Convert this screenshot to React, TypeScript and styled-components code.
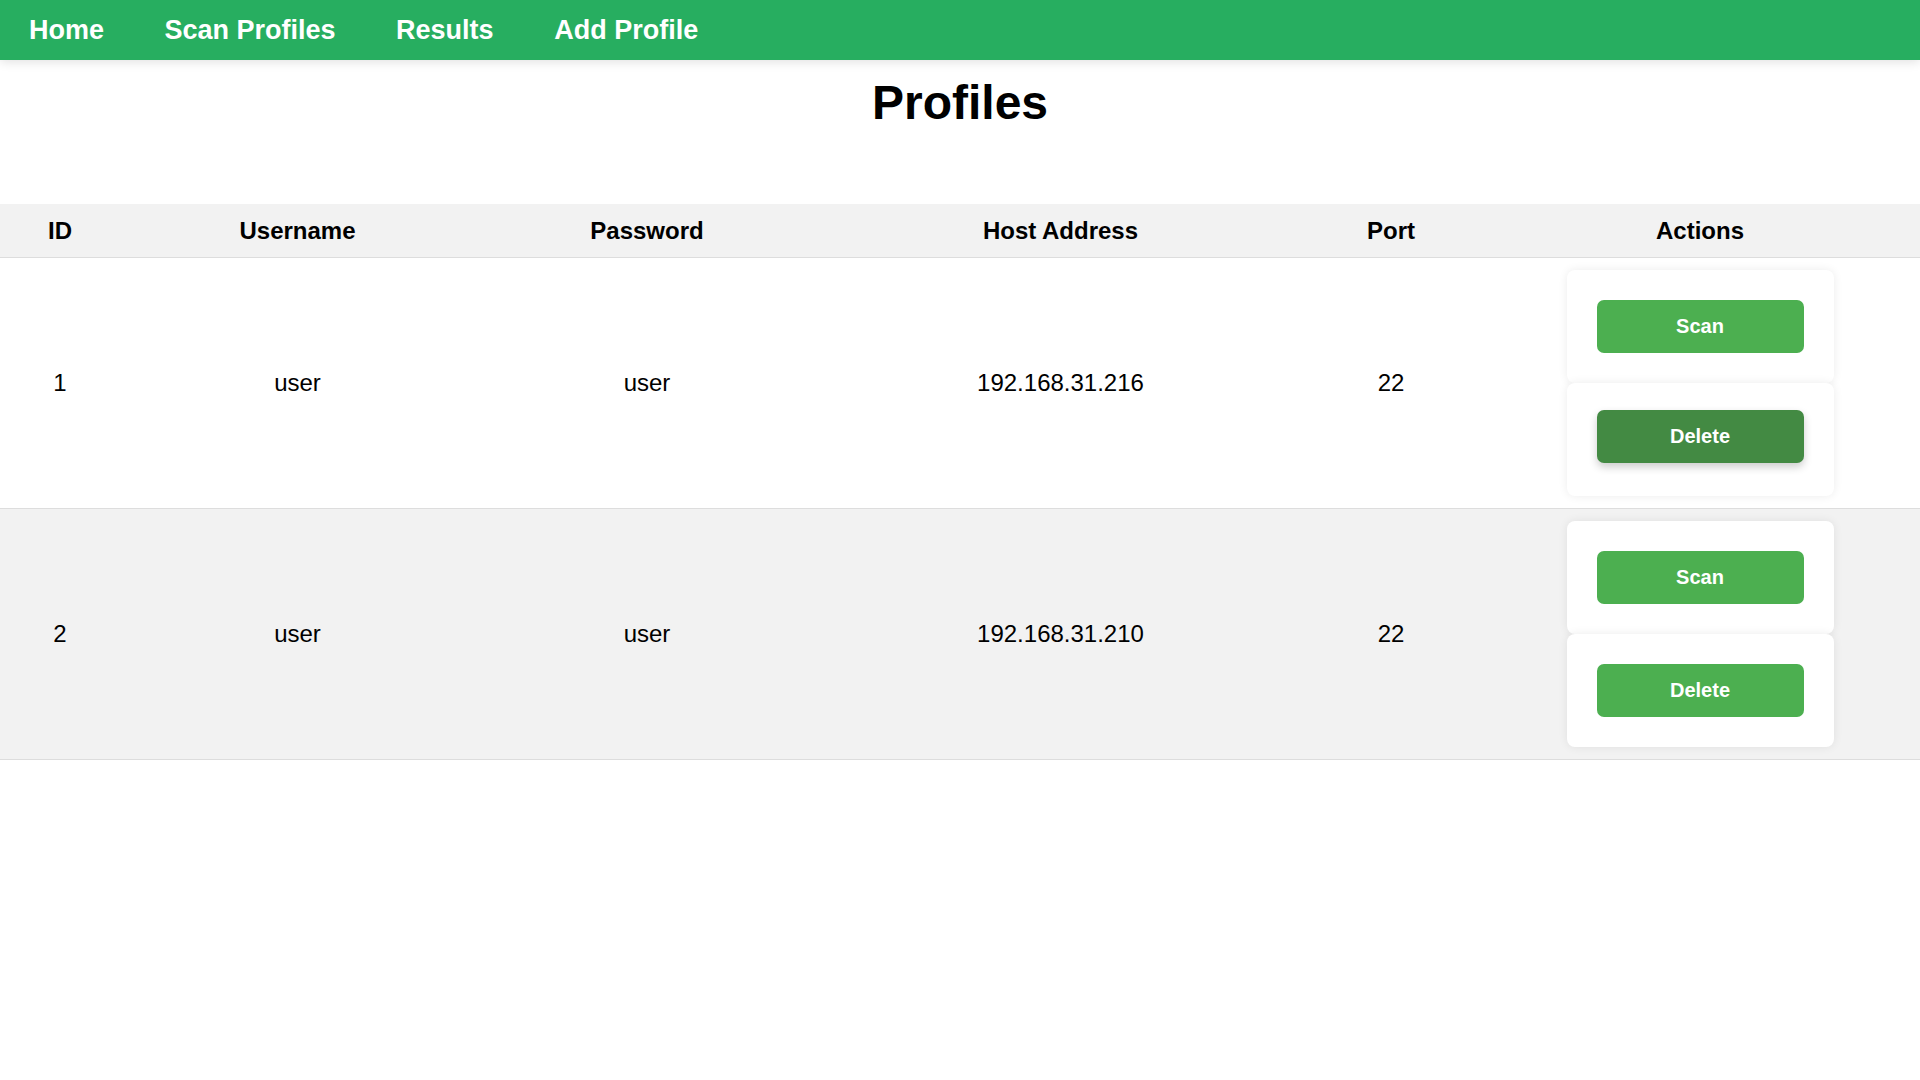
import React from "react";
import styled, { createGlobalStyle } from "styled-components";

const GlobalStyle = createGlobalStyle`
  html, body {
    margin: 0;
    padding: 0;
    background: #ffffff;
    font-family: "Liberation Sans", Arial, sans-serif;
    color: #000;
  }
  * { box-sizing: border-box; }
`;

const NavBar = styled.nav`
  display: flex;
  align-items: center;
  gap: 60.5px;
  height: 60px;
  padding-left: 29px;
  background: #27ae60;
  box-shadow: 0 2px 10px rgba(0, 0, 0, 0.12);
  position: relative;
  z-index: 1;
`;

const NavLink = styled.a`
  color: #ffffff;
  font-weight: 700;
  font-size: 27px;
  text-decoration: none;
  cursor: pointer;
`;

const Title = styled.h1`
  margin: 15px 0 0;
  text-align: center;
  font-size: 48px;
  font-weight: 700;
  line-height: normal;
`;

const Table = styled.table`
  width: 100%;
  margin-top: 74px;
  border-collapse: collapse;
  table-layout: fixed;
  font-size: 24px;
`;

const HeadCell = styled.th`
  background: #f2f2f2;
  padding: 13px 8px 12px;
  font-weight: 700;
  text-align: center;
  border-bottom: 1px solid #ddd;
`;

const Row = styled.tr<{ $striped: boolean }>`
  background: ${(p) => (p.$striped ? "#f2f2f2" : "#ffffff")};
  border-bottom: 1px solid #ddd;
`;

const Cell = styled.td`
  padding: 12px 8px;
  text-align: center;
  vertical-align: middle;
`;

const ActionStack = styled.div`
  display: flex;
  flex-direction: column;
  align-items: center;
`;

const ActionCard = styled.div`
  width: 267px;
  padding: 30px;
  background: #ffffff;
  border-radius: 8px;
  box-shadow: 0 0 10px rgba(0, 0, 0, 0.08);
`;

const ActionButton = styled.button<{ $active?: boolean }>`
  display: block;
  width: 207px;
  height: 53px;
  border: none;
  border-radius: 7px;
  background: ${(p) => (p.$active ? "#438a43" : "#4caf50")};
  color: #ffffff;
  font-family: "Liberation Sans", Arial, sans-serif;
  font-weight: 700;
  font-size: 20px;
  cursor: pointer;
  transform: ${(p) => (p.$active ? "translateY(-3px)" : "none")};
  box-shadow: ${(p) => (p.$active ? "0 4px 8px rgba(0, 0, 0, 0.2)" : "none")};
`;

const columns = [
  { label: "ID", width: 120 },
  { label: "Username", width: 355 },
  { label: "Password", width: 344 },
  { label: "Host Address", width: 483 },
  { label: "Port", width: 178 },
  { label: "Actions", width: 440 },
];

const profiles = [
  { id: 1, username: "user", password: "user", host: "192.168.31.216", port: 22 },
  { id: 2, username: "user", password: "user", host: "192.168.31.210", port: 22 },
];

export default function App() {
  return (
    <>
      <GlobalStyle />
      <NavBar>
        <NavLink>Home</NavLink>
        <NavLink>Scan Profiles</NavLink>
        <NavLink>Results</NavLink>
        <NavLink>Add Profile</NavLink>
      </NavBar>
      <Title>Profiles</Title>
      <Table>
        <colgroup>
          {columns.map((c) => (
            <col key={c.label} style={{ width: c.width }} />
          ))}
        </colgroup>
        <thead>
          <tr>
            {columns.map((c) => (
              <HeadCell key={c.label}>{c.label}</HeadCell>
            ))}
          </tr>
        </thead>
        <tbody>
          {profiles.map((p, i) => (
            <Row key={p.id} $striped={i % 2 === 1}>
              <Cell>{p.id}</Cell>
              <Cell>{p.username}</Cell>
              <Cell>{p.password}</Cell>
              <Cell>{p.host}</Cell>
              <Cell>{p.port}</Cell>
              <Cell>
                <ActionStack>
                  <ActionCard>
                    <ActionButton>Scan</ActionButton>
                  </ActionCard>
                  <ActionCard>
                    <ActionButton $active={i === 0}>Delete</ActionButton>
                  </ActionCard>
                </ActionStack>
              </Cell>
            </Row>
          ))}
        </tbody>
      </Table>
    </>
  );
}
